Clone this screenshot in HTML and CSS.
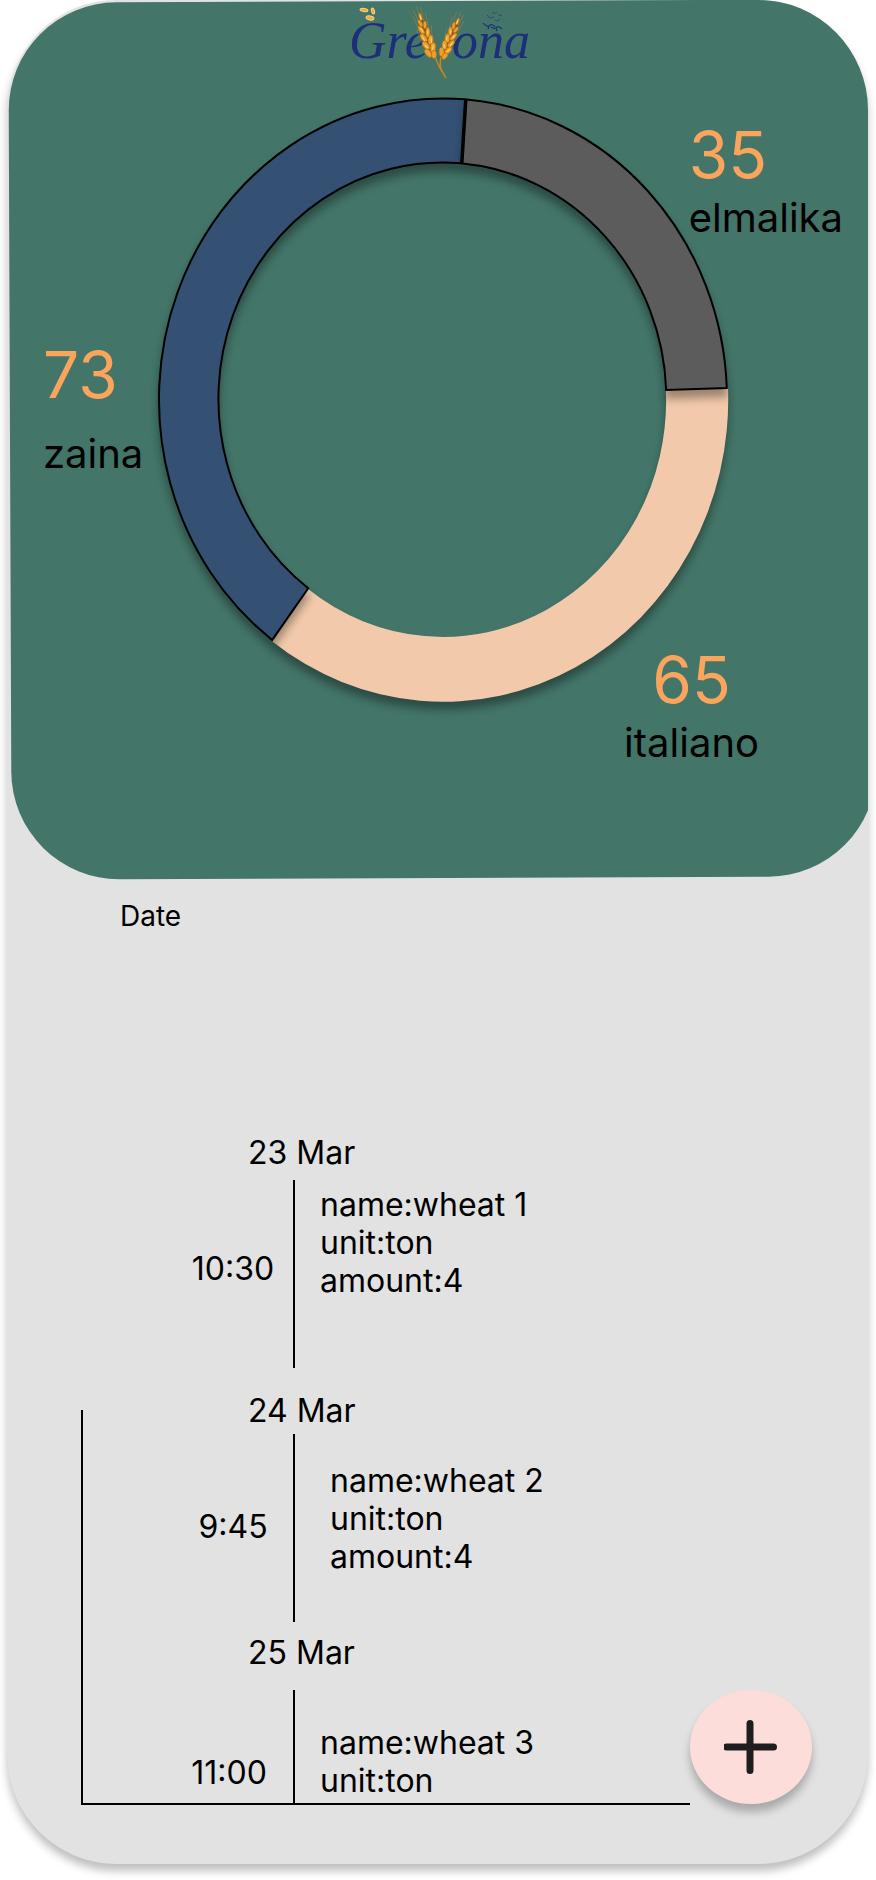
FILE: index.html
```html
<!DOCTYPE html>
<html lang="en">
<head>
<meta charset="utf-8">
<meta name="viewport" content="width=device-width, initial-scale=1">
<title>Grevona</title>
<link rel="stylesheet" href="styles.css">
</head>
<body>
<main class="card">
  <header class="summary">
    <svg class="logo" viewBox="0 0 196 82" role="img" aria-label="Grevona">
      <defs>
        <g id="ear">
          <path d="M0 0V-44" stroke="#8a4a0a" stroke-width="3"/>
          <path d="M-3-8L-8-32M-4-20L-7-46M-2-32L-5-52M0-40L-1-54M2-36L3-52M4-22L6-46M3-10L8-32" stroke="#a8854a" stroke-width="1" opacity=".5"/>
          <g fill="#e9a02c" stroke="#a9661a" stroke-width=".6">
            <ellipse cx="0" cy="-43" rx="1.600" ry="4"/>
            <ellipse cx="-2" cy="-37" rx="1.800" ry="4" transform="rotate(-16 -2 -37)"/>
            <ellipse cx="2" cy="-34" rx="1.800" ry="4" transform="rotate(16 2 -34)"/>
            <ellipse cx="-3" cy="-30" rx="2.200" ry="5" transform="rotate(-18 -3 -30)"/>
            <ellipse cx="2.500" cy="-26" rx="2.200" ry="5" transform="rotate(18 2.500 -26)"/>
            <ellipse cx="-3" cy="-22" rx="2.600" ry="5" transform="rotate(-20 -3 -22)"/>
            <ellipse cx="3" cy="-18" rx="2.600" ry="5" transform="rotate(20 3 -18)"/>
            <ellipse cx="-3" cy="-14" rx="2.800" ry="5" transform="rotate(-22 -3 -14)"/>
            <ellipse cx="3" cy="-10" rx="2.800" ry="5" transform="rotate(22 3 -10)"/>
            <ellipse cx="-3" cy="-6" rx="2.800" ry="5" transform="rotate(-24 -3 -6)"/>
            <ellipse cx="2" cy="-3" rx="2.600" ry="4" transform="rotate(18 2 -3)"/>
          </g>
          <path d="M0-44V-40M-3-32L-2-28M3-28L2-24M-4-24L-3-19M4-20L3-15M-4-15L-2-11M4-12L2-8" stroke="#ffd678" stroke-width="1"/>
        </g>
      </defs>
      <text class="logo-text" x="4" y="58">Gre</text>
      <text class="logo-text" x="107" y="58">ona</text>
      <g fill="#f0ab3c" stroke="#fbd37c" stroke-width="1">
        <ellipse cx="19" cy="10" rx="4" ry="1.500" transform="rotate(8 19 10)"/>
        <ellipse cx="28" cy="11" rx="1.500" ry="3" transform="rotate(-14 28 11)"/>
        <ellipse cx="25" cy="18" rx="4" ry="2" transform="rotate(12 25 18)"/>
      </g>
      <g fill="none">
        <path d="M90 57Q94 68 101 78M96 57Q94 66 97 71L101 78" stroke="#c9842a" stroke-width="1.500"/>
        <use href="#ear" transform="translate(88 58) rotate(-17)"/>
        <use href="#ear" transform="translate(97 58) rotate(23) scale(.92)"/>
      </g>
      <g fill="none" stroke="#1c2f78" stroke-width=".6">
        <path stroke-width="1.200" d="M138 23Q141 27 144 26Q147 23 150 27M144 26L143 29M146 27Q149 29 151 28Q153 25 157 29M151 28L152 31"/>
        <path d="M142 15L145 18L149 17M147 12Q150 15 152 12M150 20Q153 22 155 19M153 14Q155 17 157 15"/>
      </g>
    </svg>

    <section class="chart" aria-label="Stock by warehouse">
      <svg class="donut" viewBox="0 0 569 604" aria-hidden="true">
        <path class="slice slice-italiano" d="M569 290A284.500 301.500 0 0 1 113.500 543L149.500 491A223 236 0 0 0 507 292Z"/>
        <path class="slice slice-zaina" d="M306.500 2.300A283.500 300.500 0 0 0 114 542L150 490.400A223.500 236 0 0 1 302.500 66.200Z"/>
        <path class="slice slice-elmalika" d="M308 2.500A283.500 300.500 0 0 1 567.800 290.500L507.300 292.500A223.500 236 0 0 0 304 66.400Z"/>
      </svg>
      <div class="stat stat-elmalika"><strong class="stat-value">35</strong><span class="stat-name">elmalika</span></div>
      <div class="stat stat-zaina"><strong class="stat-value">73</strong><span class="stat-name">zaina</span></div>
      <div class="stat stat-italiano"><strong class="stat-value">65</strong><span class="stat-name">italiano</span></div>
    </section>
  </header>

  <section class="history">
    <h1 class="history-title">Date</h1>
    <div class="history-row">
      <div class="timeline">
        <article class="entry entry-first">
          <h2 class="entry-date">23 Mar</h2>
          <div class="entry-body">
            <time class="entry-time">10:30</time>
            <ul class="entry-details"><li>name:wheat 1</li><li>unit:ton</li><li>amount:4</li></ul>
          </div>
        </article>
        <article class="entry entry-second">
          <h2 class="entry-date">24 Mar</h2>
          <div class="entry-body">
            <time class="entry-time">9:45</time>
            <ul class="entry-details"><li>name:wheat 2</li><li>unit:ton</li><li>amount:4</li></ul>
          </div>
        </article>
        <article class="entry entry-third">
          <h2 class="entry-date">25 Mar</h2>
          <div class="entry-body">
            <time class="entry-time">11:00</time>
            <ul class="entry-details"><li>name:wheat 3</li><li>unit:ton</li></ul>
          </div>
        </article>
      </div>
      <button class="add" type="button" aria-label="Add entry">
        <svg class="add-icon" viewBox="0 0 54 54" aria-hidden="true"><path d="M26 3.500V50.500M2.500 27H49.500"/></svg>
      </button>
    </div>
  </section>
</main>
</body>
</html>
```
FILE: styles.css
```css
* {
  box-sizing: border-box;
}

body {
  margin: 0;
  background: #fff;
  color: #000;
  font-family: Inter, "Liberation Sans", sans-serif;
}

.card {
  display: flow-root;
  margin: 0 8px 16px 7px;
  padding-bottom: 59px;
  border-radius: 110px;
  background: #e2e2e2;
  box-shadow: 0 7px 8px rgba(0, 0, 0, 0.25);
  overflow: hidden;
}

.summary {
  position: relative;
  display: flex;
  flex-direction: column;
  align-items: center;
  gap: 15px;
  padding: 0 25px 110px 36px;
}

/* Slightly tilted green panel behind the chart */
.summary::before {
  content: "";
  position: absolute;
  inset: 1px -7px -1px 3px;
  border-radius: 108px;
  background: #437569;
  transform: rotate(-0.22deg);
}

.logo {
  position: relative;
  display: block;
  width: 196px;
  height: 82px;
}

.logo-text {
  fill: #1c2f78;
  font-family: "Liberation Serif", serif;
  font-size: 52px;
  font-style: italic;
}

.chart {
  position: relative;
  display: grid;
  align-self: stretch;
}

.donut,
.stat {
  grid-area: 1 / 1;
  align-self: start;
}

.donut {
  justify-self: center;
  width: 100%;
  max-width: 570px;
  overflow: visible;
}

.slice {
  stroke: #000;
  stroke-width: 2;
  filter: drop-shadow(0 8px 4px rgba(0, 0, 0, 0.35));
}

.slice-italiano {
  fill: #f2c9aa;
  stroke: none;
}

.slice-zaina {
  fill: #345072;
}

.slice-elmalika {
  fill: #5c5c5c;
}

.stat {
  display: flex;
  flex-direction: column;
  gap: 7px;
}

.stat-value {
  color: #fba55c;
  font-size: 64px;
  font-weight: 400;
  line-height: 64px;
}

.stat-name {
  font-size: 40px;
  line-height: 48px;
}

.stat-elmalika {
  justify-self: end;
  margin-top: 26px;
}

.stat-zaina {
  justify-self: start;
  gap: 23px;
  margin-top: 246px;
}

.stat-italiano {
  justify-self: end;
  align-items: center;
  margin: 551px 84px 0 0;
}

.history {
  padding: 22px 56px 0 74px;
}

.history-title {
  margin: 0 0 201px 39px;
  font-size: 28px;
  font-weight: 400;
  line-height: 34px;
}

.history-row {
  display: flex;
  align-items: flex-end;
}

.timeline {
  position: relative;
  flex: 1;
  padding-bottom: 2px;
  font-size: 32px;
  line-height: 38px;
}

.timeline::before {
  content: "";
  position: absolute;
  inset: 276px 0 0 0;
  border: solid #000;
  border-width: 0 0 2px 2px;
}

.entry {
  display: flex;
  flex-direction: column;
}

.entry-date {
  margin: 0;
  padding-left: 167px;
  font-size: 32px;
  font-weight: 400;
}

.entry-body {
  display: grid;
  grid-template-columns: 212px 1fr;
}

.entry-time {
  padding-left: 92px;
  text-align: center;
}

.entry-details {
  margin: 0;
  padding-left: 25px;
  border-left: 2px solid #000;
  list-style: none;
}

.entry-first {
  gap: 8px;
  margin-bottom: 24px;
}

.entry-first .entry-time {
  padding-top: 70px;
}

.entry-first .entry-details {
  padding-top: 6px;
  padding-bottom: 68px;
}

.entry-second {
  gap: 4px;
  margin-bottom: 12px;
}

.entry-second .entry-time {
  padding-top: 74px;
}

.entry-second .entry-details {
  padding: 28px 0 46px 35px;
}

.entry-third {
  gap: 18px;
}

.entry-third .entry-time {
  padding-top: 64px;
  padding-left: 84px;
}

.entry-third .entry-details {
  padding-top: 34px;
  padding-bottom: 3px;
}

.add {
  display: grid;
  place-items: center;
  width: 122px;
  height: 114px;
  margin-bottom: 1px;
  padding: 0;
  border: 0;
  border-radius: 50%;
  background: #fdddd9;
  box-shadow: 0 8px 8px rgba(0, 0, 0, 0.25);
  cursor: pointer;
}

.add-icon {
  width: 54px;
  height: 54px;
  fill: none;
  stroke: #1e1e1e;
  stroke-width: 7;
  stroke-linecap: round;
}
```
